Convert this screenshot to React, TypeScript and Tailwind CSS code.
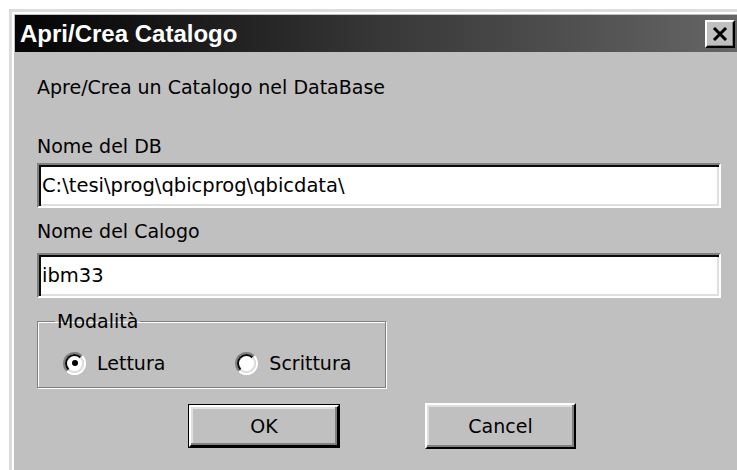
import React from "react";

const uiFont = { fontFamily: '"DejaVu Sans", Verdana, sans-serif' };
const captionFont = { fontFamily: '"Liberation Sans", Arial, sans-serif' };

function Radio({ checked }: { checked: boolean }) {
  return (
    <div className="h-[23px] w-[23px] shrink-0 rounded-full border-2 border-t-[#808080] border-l-[#808080] border-r-white border-b-white">
      <div className="flex h-full w-full items-center justify-center rounded-full border-2 border-t-[#0a0a0a] border-l-[#0a0a0a] border-r-[#dfdfdf] border-b-[#dfdfdf] bg-white">
        {checked && <div className="h-[6px] w-[6px] rounded-full bg-black" />}
      </div>
    </div>
  );
}

function Button({ label, isDefault }: { label: string; isDefault?: boolean }) {
  const inner = (
    <div className="flex h-full w-full items-center justify-center border-2 border-t-white border-l-white border-r-black border-b-black bg-[#c0c0c0] shadow-[inset_-2px_-2px_0_#808080,inset_2px_2px_0_#dfdfdf] text-[19px] text-black">
      {label}
    </div>
  );
  if (isDefault) {
    return <div className="h-[44px] w-[152px] border border-black">{inner}</div>;
  }
  return <div className="h-[46px] w-[151px]">{inner}</div>;
}

function TextBox({ value }: { value: string }) {
  return (
    <div className="flex h-[45px] w-[684px] items-center border-2 border-t-[#808080] border-l-[#808080] border-r-white border-b-white bg-white pl-[3px] shadow-[inset_2px_2px_0_#0a0a0a,inset_-2px_-2px_0_#dfdfdf] text-[19.5px] text-black">
      {value}
    </div>
  );
}

export default function App() {
  return (
    <div className="h-[470px] w-[737px] overflow-hidden bg-white" style={uiFont}>
      <div className="ml-[9px] mt-[9px] w-[745px] border-l-[3px] border-t-[3px] border-[#dcdcdc]">
        <div className="h-[470px] border-l-2 border-t-2 border-white bg-[#c0c0c0] pl-px pt-px">
          {/* caption bar */}
          <div className="flex h-[37px] items-center justify-between bg-gradient-to-r from-[#050505] via-[#383838] via-50% to-[#686868] pl-[5px] pr-[19px]">
            <span className="text-[24px] font-bold leading-none text-white" style={captionFont}>
              Apri/Crea Catalogo
            </span>
            <div className="flex h-[28px] w-[30px] items-center justify-center border-2 border-t-white border-l-white border-r-black border-b-black bg-[#c0c0c0] shadow-[inset_-1px_-1px_0_#808080]">
              <svg width="16" height="14" viewBox="0 0 16 14">
                <path d="M2 1 L14 13 M14 1 L2 13" stroke="#000" strokeWidth="3" />
              </svg>
            </div>
          </div>

          {/* dialog body */}
          <div className="flex flex-col pl-[22px] text-black">
            <div className="mt-[24px] text-[19px] leading-[22px]">Apre/Crea un Catalogo nel DataBase</div>

            <div className="mt-[37px] text-[19px] leading-[22px]">Nome del DB</div>
            <div className="mt-[6px]">
              <TextBox value="C:\tesi\prog\qbicprog\qbicdata\" />
            </div>

            <div className="mt-[12px] text-[19px] leading-[22px]">Nome del Calogo</div>
            <div className="mt-[11px]">
              <TextBox value="ibm33" />
            </div>

            <fieldset className="mt-[12px] w-[349px] border border-[#808080] px-0 pb-[12px] pt-[19px] shadow-[1px_1px_0_#ffffff,inset_1px_1px_0_#ffffff]">
              <legend className="ml-[17px] px-[2px] text-[19px] leading-[22px]">Modalità</legend>
              <div className="flex h-[24px] items-center text-[19px]">
                <div className="ml-[25px] flex items-center gap-[11px]">
                  <Radio checked />
                  <span>Lettura</span>
                </div>
                <div className="ml-[70px] flex items-center gap-[11px]">
                  <Radio checked={false} />
                  <span>Scrittura</span>
                </div>
              </div>
            </fieldset>

            <div className="mt-[15px] flex items-center gap-[85px] pl-[151px]">
              <Button label="OK" isDefault />
              <Button label="Cancel" />
            </div>
          </div>
        </div>
      </div>
    </div>
  );
}
